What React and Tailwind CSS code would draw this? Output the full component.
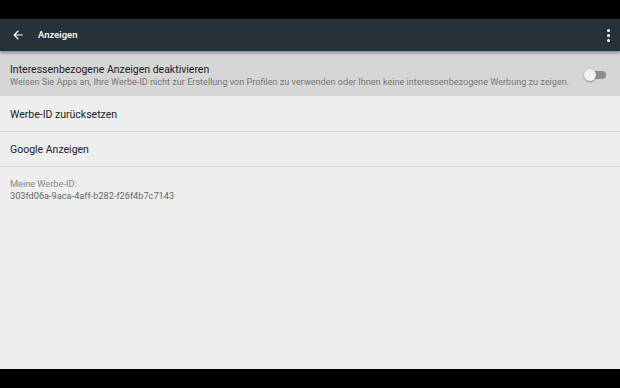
export default function App() {
  return (
    <div className="w-[620px] h-[388px] bg-black flex flex-col overflow-hidden" style={{ fontFamily: "Roboto, 'Liberation Sans', sans-serif" }}>
      <div className="h-[19px] shrink-0 bg-black" />
      <div className="flex-1 flex flex-col bg-[#eeeeee] relative">
        <div className="h-[32px] shrink-0 bg-[#263238] flex items-center pl-[11px] pr-[10px] relative z-10 shadow-[0_2px_3px_rgba(0,0,0,0.35)]">
          <svg width="14" height="14" viewBox="0 0 24 24" className="text-white">
            <path d="M20 11H7.83l5.59-5.59L12 4l-8 8 8 8 1.41-1.41L7.83 13H20v-2z" fill="currentColor" />
          </svg>
          <span className="ml-[13px] text-white text-[9.5px] font-medium">Anzeigen</span>
          <div className="ml-auto flex flex-col gap-[2px] items-center">
            <span className="w-[3px] h-[3px] rounded-full bg-white" />
            <span className="w-[3px] h-[3px] rounded-full bg-white" />
            <span className="w-[3px] h-[3px] rounded-full bg-white" />
          </div>
        </div>
        <div className="h-[45px] bg-[#d6d6d6] flex items-center pl-[10px] pr-[14px]">
          <div className="flex-1 flex flex-col pt-[4px]">
            <span className="text-[10.5px] text-[#222] leading-[13px]">Interessenbezogene Anzeigen deaktivieren</span>
            <span className="text-[9.1px] text-[#777] leading-[13px]">Weisen Sie Apps an, Ihre Werbe-ID nicht zur Erstellung von Profilen zu verwenden oder Ihnen keine interessenbezogene Werbung zu zeigen.</span>
          </div>
          <div className="relative w-[22px] h-[12px] flex items-center mt-[2px]">
            <div className="absolute left-[4px] right-0 h-[8px] rounded-full bg-[#8e8e8e]" />
            <div className="absolute left-0 w-[12px] h-[12px] rounded-full bg-[#f1f1f1] shadow-[0_1px_2px_rgba(0,0,0,0.35)]" />
          </div>
        </div>
        <div className="h-[36px] flex items-center pl-[10px] pt-[2px] border-b border-[#dcdcdc]">
          <span className="text-[10.5px] text-[#222]">Werbe-ID zurücksetzen</span>
        </div>
        <div className="h-[35px] flex items-center pl-[10px] pt-[2px] border-b border-[#dcdcdc]">
          <span className="text-[10.5px] text-[#222]">Google Anzeigen</span>
        </div>
        <div className="pl-[10px] pt-[11px] flex flex-col">
          <span className="text-[9.2px] text-[#888] leading-[12px]">Meine Werbe-ID:</span>
          <span className="text-[9.2px] text-[#666] leading-[12px]">303fd06a-9aca-4aff-b282-f26f4b7c7143</span>
        </div>
      </div>
      <div className="h-[19px] shrink-0 bg-black" />
    </div>
  );
}
